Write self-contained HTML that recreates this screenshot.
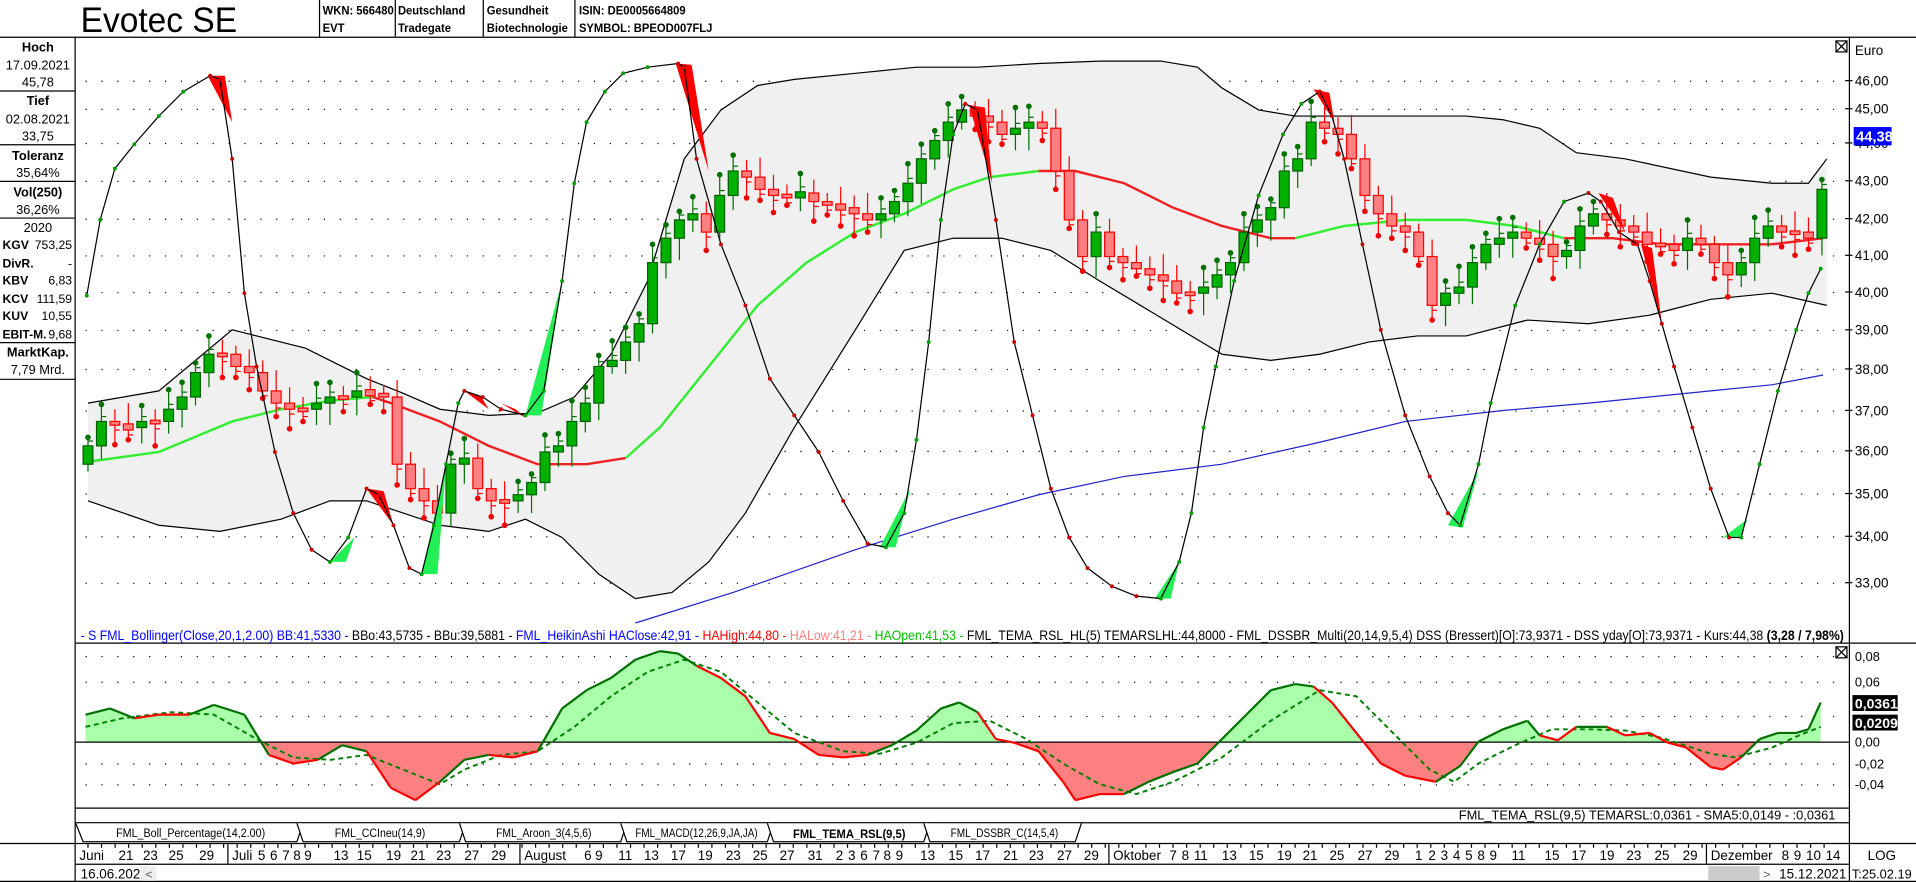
<!DOCTYPE html>
<html><head><meta charset="utf-8">
<style>
html,body{margin:0;padding:0;background:#fff;overflow:hidden;width:1916px;height:882px}
#w{width:1568px;height:722px;transform:scale(1.22194,1.2216);transform-origin:0 0;position:relative}
svg text{font-family:"Liberation Sans",Arial,sans-serif}
</style></head><body><div id="w">
<svg id="s" width="1568" height="722" viewBox="0 0 1568 722" xmlns="http://www.w3.org/2000/svg">
<defs>
<clipPath id="cm"><rect x="62" y="31" width="1451" height="495"/></clipPath>
<clipPath id="up"><rect x="62" y="527" width="1451" height="80"/></clipPath>
<clipPath id="dn"><rect x="62" y="607" width="1451" height="54"/></clipPath>
</defs>
<rect width="1568" height="722" fill="#fff"/>
<text x="66" y="26" font-size="29" fill="#000" textLength="128" lengthAdjust="spacingAndGlyphs">Evotec SE</text>
<g stroke="#000" stroke-width="1" fill="none">
<line x1="261.5" y1="0" x2="261.5" y2="30"/><line x1="323.5" y1="0" x2="323.5" y2="30"/><line x1="395.5" y1="0" x2="395.5" y2="30"/><line x1="470.5" y1="0" x2="470.5" y2="30"/>
<line x1="0" y1="30.5" x2="1568" y2="30.5"/>
<line x1="61.5" y1="30" x2="61.5" y2="722"/>
<line x1="1513.5" y1="30" x2="1513.5" y2="722"/>
<line x1="62" y1="526.5" x2="1568" y2="526.5"/>
<line x1="62" y1="661.5" x2="1513" y2="661.5"/>
<line x1="62" y1="673.5" x2="1513" y2="673.5"/>
<line x1="0" y1="690.5" x2="1568" y2="690.5"/>
<line x1="62" y1="707.5" x2="1513" y2="707.5"/>
<line x1="0" y1="721.5" x2="1568" y2="721.5"/>
<line x1="0" y1="74.5" x2="61" y2="74.5"/><line x1="0" y1="118.5" x2="61" y2="118.5"/><line x1="0" y1="148.5" x2="61" y2="148.5"/><line x1="0" y1="178.5" x2="61" y2="178.5"/><line x1="0" y1="280.5" x2="61" y2="280.5"/><line x1="0" y1="310.5" x2="61" y2="310.5"/>
</g>
<g font-size="10" font-weight="bold" transform="scale(0.92,1)">
<text x="287" y="12">WKN: 566480</text><text x="287" y="26">EVT</text>
<text x="354" y="12">Deutschland</text><text x="354" y="26">Tradegate</text>
<text x="433" y="12">Gesundheit</text><text x="433" y="26">Biotechnologie</text>
<text x="515" y="12">ISIN: DE0005664809</text><text x="515" y="26">SYMBOL: BPEOD007FLJ</text>
</g>
<g font-size="10.5" text-anchor="middle">
<text x="31" y="42" font-weight="bold">Hoch</text><text x="31" y="57">17.09.2021</text><text x="31" y="71">45,78</text>
<text x="31" y="86" font-weight="bold">Tief</text><text x="31" y="101">02.08.2021</text><text x="31" y="115">33,75</text>
<text x="31" y="131" font-weight="bold">Toleranz</text><text x="31" y="145">35,64%</text>
<text x="31" y="161" font-weight="bold">Vol(250)</text><text x="31" y="175">36,26%</text>
<text x="31" y="190">2020</text>
<text x="31" y="292" font-weight="bold">MarktKap.</text><text x="31" y="306">7,79 Mrd.</text>
</g>
<g font-size="10">
<text x="2" y="204" font-weight="bold">KGV</text><text x="59" y="204" text-anchor="end">753,25</text>
<text x="2" y="219" font-weight="bold">DivR.</text><text x="59" y="219" text-anchor="end">-</text>
<text x="2" y="233" font-weight="bold">KBV</text><text x="59" y="233" text-anchor="end">6,83</text>
<text x="2" y="248" font-weight="bold">KCV</text><text x="59" y="248" text-anchor="end">111,59</text>
<text x="2" y="262" font-weight="bold">KUV</text><text x="59" y="262" text-anchor="end">10,55</text>
<text x="2" y="277" font-weight="bold" textLength="36" lengthAdjust="spacingAndGlyphs">EBIT-M.</text><text x="59" y="277" text-anchor="end">9,68</text>
</g>
<g id="grid"></g>
<g id="main" clip-path="url(#cm)"></g>
<g font-size="11">
<text x="1518" y="45">Euro</text>
<text x="1518" y="70">46,00</text><text x="1518" y="93">45,00</text><text x="1518" y="121">44,00</text><text x="1518" y="152">43,00</text><text x="1518" y="183">42,00</text><text x="1518" y="213">41,00</text><text x="1518" y="243">40,00</text><text x="1518" y="274">39,00</text><text x="1518" y="306">38,00</text><text x="1518" y="340">37,00</text><text x="1518" y="373">36,00</text><text x="1518" y="408">35,00</text><text x="1518" y="443">34,00</text><text x="1518" y="481">33,00</text>
</g>
<g stroke="#000">
<line x1="1510" y1="66" x2="1516" y2="66"/><line x1="1510" y1="89" x2="1516" y2="89"/><line x1="1510" y1="117" x2="1516" y2="117"/><line x1="1510" y1="148" x2="1516" y2="148"/><line x1="1510" y1="179" x2="1516" y2="179"/><line x1="1510" y1="209" x2="1516" y2="209"/><line x1="1510" y1="239" x2="1516" y2="239"/><line x1="1510" y1="270" x2="1516" y2="270"/><line x1="1510" y1="302" x2="1516" y2="302"/><line x1="1510" y1="336" x2="1516" y2="336"/><line x1="1510" y1="369" x2="1516" y2="369"/><line x1="1510" y1="404" x2="1516" y2="404"/><line x1="1510" y1="439" x2="1516" y2="439"/><line x1="1510" y1="477" x2="1516" y2="477"/>
</g>
<rect x="1517" y="104" width="31" height="15" fill="#0000ff"/>
<text x="1519" y="116" font-size="12" font-weight="bold" fill="#fff">44,38</text>
<g stroke="#000" fill="#fff"><rect x="1502.5" y="33.5" width="9" height="9"/><line x1="1503" y1="34" x2="1511" y2="42"/><line x1="1511" y1="34" x2="1503" y2="42"/>
<rect x="1502.5" y="529.5" width="9" height="9"/><line x1="1503" y1="530" x2="1511" y2="538"/><line x1="1511" y1="530" x2="1503" y2="538"/></g>
<text x="66" y="524" font-size="11" textLength="1443" lengthAdjust="spacingAndGlyphs"><tspan fill="#0000ff">- S FML_Bollinger(Close,20,1,2.00) BB:41,5330 - </tspan><tspan fill="#000">BBo:43,5735 - BBu:39,5881 - </tspan><tspan fill="#0000ff">FML_HeikinAshi HAClose:42,91 - </tspan><tspan fill="#ff0000">HAHigh:44,80 - </tspan><tspan fill="#ff8080">HALow:41,21 - </tspan><tspan fill="#00c000">HAOpen:41,53 - </tspan><tspan fill="#000">FML_TEMA_RSL_HL(5) TEMARSLHL:44,8000 - FML_DSSBR_Multi(20,14,9,5,4) DSS (Bressert)[O]:73,9371 - DSS yday[O]:73,9371 - Kurs:44,38 </tspan><tspan font-weight="bold">(3,28 / 7,98%)</tspan></text>
<g id="ind"></g>
<g font-size="10.5">
<text x="1518" y="541">0,08</text><text x="1518" y="562">0,06</text><text x="1518" y="611">0,00</text><text x="1518" y="629">-0,02</text><text x="1518" y="646">-0,04</text>
</g>
<rect x="1516" y="569" width="37" height="13" fill="#000"/><text x="1518" y="580" font-size="11.5" font-weight="bold" fill="#fff">0,0361</text>
<rect x="1516" y="585" width="37" height="13" fill="#000"/><text x="1518" y="596" font-size="11.5" font-weight="bold" fill="#fff">0,0209</text>
<text x="1502" y="671" font-size="10.5" text-anchor="end">FML_TEMA_RSL(9,5) TEMARSL:0,0361 - SMA5:0,0149 - :0,0361</text>
<g fill="#fff" stroke="#000">
<path d="M62 674 L68 689 L243 689 L248 674"/>
<path d="M243 674 L248 689 L376 689 L381 674"/>
<path d="M376 674 L381 689 L508 689 L513 674"/>
<path d="M508 674 L513 689 L628 689 L633 674"/>
<path d="M628 674 L633 689 L756 689 L761 674"/>
<path d="M756 674 L761 689 L880 689 L885 674"/>
</g>
<g font-size="10" text-anchor="middle">
<text x="156" y="685" textLength="122" lengthAdjust="spacingAndGlyphs">FML_Boll_Percentage(14,2.00)</text>
<text x="311" y="685" textLength="74" lengthAdjust="spacingAndGlyphs">FML_CCIneu(14,9)</text>
<text x="445" y="685" textLength="78" lengthAdjust="spacingAndGlyphs">FML_Aroon_3(4,5,6)</text>
<text x="570" y="685" textLength="100" lengthAdjust="spacingAndGlyphs">FML_MACD(12,26,9,JA,JA)</text>
<text x="695" y="686" font-weight="bold" textLength="92" lengthAdjust="spacingAndGlyphs">FML_TEMA_RSL(9,5)</text>
<text x="822" y="685" textLength="88" lengthAdjust="spacingAndGlyphs">FML_DSSBR_C(14,5,4)</text>
</g>
<g id="dates" font-size="11"></g>
<text x="66" y="719" font-size="11">16.06.2021</text>
<rect x="116" y="709" width="12" height="12" fill="#eee"/><text x="119" y="719" font-size="10" fill="#555">&lt;</text>
<rect x="1398" y="709" width="42" height="12" fill="#ccc"/><text x="1443" y="719" font-size="10" fill="#555">&gt;</text>
<text x="1511" y="719" font-size="11" text-anchor="end">15.12.2021</text>
<text x="1540" y="704" font-size="11" text-anchor="middle">LOG</text>
<text x="1540" y="719" font-size="10.5" text-anchor="middle">T:25.02.19</text>
</svg></div>
<script>
var NS="http://www.w3.org/2000/svg";
function el(p,t,a){var e=document.createElementNS(NS,t);for(var k in a)e.setAttribute(k,a[k]);p.appendChild(e);return e;}
function pts(a){var s=[];for(var i=0;i<a.length;i+=2)s.push(a[i]+","+a[i+1]);return s.join(" ");}
var G=document.getElementById("grid"),M=document.getElementById("main"),I=document.getElementById("ind");
var gy=[66,89,117,148,179,209,239,270,302,336,369,404,439,477];
var d="";
gy.forEach(function(y){for(var x=70;x<1505;x+=13)d+="M"+x+" "+y+"h1v1h-1z";});
el(G,"path",{d:d,fill:"#000"});
var U=[72,330,130,320,160,295,190,270,250,285,300,310,330,322,360,335,400,340,440,338,470,325,500,290,530,230,560,130,590,90,620,70,650,65,700,60,750,55,800,55,850,52,900,50,950,50,980,55,1000,72,1030,90,1060,95,1100,95,1150,95,1200,95,1230,98,1260,105,1290,125,1330,130,1400,145,1450,150,1480,150,1495,130];
var L=[72,410,130,430,180,435,230,425,270,410,300,410,330,420,360,430,400,435,430,425,460,440,490,470,520,490,550,485,580,460,610,420,650,350,700,270,740,205,780,195,820,195,860,205,900,230,950,260,1000,290,1040,295,1080,290,1120,280,1160,275,1200,275,1250,262,1300,265,1350,258,1400,245,1450,240,1495,250];
var poly=U.slice();for(var i=L.length-2;i>=0;i-=2)poly.push(L[i],L[i+1]);
el(M,"polygon",{points:pts(poly),fill:"#f0f0f0"});
el(M,"polyline",{points:pts(U),fill:"none",stroke:"#000","stroke-width":1});
el(M,"polyline",{points:pts(L),fill:"none",stroke:"#000","stroke-width":1});
el(M,"polyline",{points:pts([72,378,130,370,190,345,230,335,270,328,305,325]),fill:"none",stroke:"#33ee33","stroke-width":2});
el(M,"polyline",{points:pts([305,325,320,330,360,345,400,365,440,380,480,380,512,375]),fill:"none",stroke:"#ee2222","stroke-width":2});
el(M,"polyline",{points:pts([512,375,540,350,580,300,620,250,660,215,700,190,740,175,780,155,810,145,850,140]),fill:"none",stroke:"#33ee33","stroke-width":2});
el(M,"polyline",{points:pts([850,140,880,140,920,150,960,170,1000,185,1040,195,1060,195]),fill:"none",stroke:"#ee2222","stroke-width":2});
el(M,"polyline",{points:pts([1060,195,1100,185,1150,180,1200,180,1240,185,1280,195]),fill:"none",stroke:"#33ee33","stroke-width":2});
el(M,"polyline",{points:pts([1280,195,1320,195,1360,200,1400,200,1450,200,1492,195]),fill:"none",stroke:"#ee2222","stroke-width":2});
el(M,"polyline",{points:pts([520,510,600,485,700,450,780,425,850,405,920,390,1000,380,1080,362,1150,345,1230,336,1300,330,1400,320,1450,315,1492,307]),fill:"none",stroke:"#2222cc","stroke-width":1});
var C=[365,345,348,350,345,345,335,325,305,290,290,300,305,320,330,335,335,330,325,325,320,322,325,380,400,410,420,380,375,400,410,410,405,395,370,365,345,330,300,295,280,265,215,195,180,175,190,160,140,145,155,160,160,158,165,168,170,175,180,175,165,150,130,115,100,90,95,100,110,105,100,105,140,180,210,190,210,215,220,225,230,240,240,235,225,215,190,180,170,140,130,100,105,110,130,160,175,185,190,210,250,240,235,215,200,195,190,195,200,210,205,185,175,180,185,190,200,200,205,195,200,215,225,215,195,185,190,190,195,155];
var x0=72,dx=(1491-72)/(C.length-1);
for(var i=0;i<C.length;i++){
 var x=x0+i*dx,o=i?C[i-1]:C[0]+15,c=C[i],up=c<o;
 var t=Math.min(o,c),b=Math.max(o,c);if(b-t<3){t-=1;b+=2;}
 var hi=t-7-(i*7%11),lo=b+6+(i*5%13);
 var sc=up?"#007000":"#ff0000";
 el(M,"line",{x1:x,y1:hi,x2:x,y2:lo,stroke:sc,"stroke-width":1});
 el(M,"line",{x1:x,y1:up?t-4:b+4,x2:x+4,y2:up?t-4:b+4,stroke:sc});
 el(M,"rect",{x:x-4,y:t,width:8,height:b-t,fill:up?"#00b000":"#ff8080",stroke:up?"#006000":"#ff0000","stroke-width":1});
 el(M,"circle",{cx:x,cy:up?hi:lo,r:2.3,fill:up?"#007000":"#ee0000"});
}
var T=[71,242,82,180,94,138,110,118,130,95,150,75,172,62,180,65,190,130,200,240,210,300,225,370,240,420,255,450,270,460,285,440,300,400,310,405,322,430,335,465,345,470,355,430,365,380,375,330,380,320,395,325,410,335,430,340,445,320,460,230,470,150,480,100,495,75,510,60,530,55,555,52,560,55,570,130,590,200,610,250,630,310,650,340,670,370,690,410,710,445,725,448,740,420,750,360,760,280,770,180,780,110,790,85,800,90,815,180,830,280,845,340,860,400,875,440,890,465,910,480,930,488,950,490,965,460,975,420,985,350,995,300,1010,230,1030,160,1050,110,1065,85,1080,75,1090,95,1100,130,1115,200,1130,270,1150,340,1170,390,1185,420,1195,430,1210,380,1220,330,1240,250,1260,200,1280,165,1300,158,1310,165,1325,190,1340,200,1350,230,1360,265,1370,300,1385,350,1400,400,1415,440,1425,440,1440,380,1455,320,1470,270,1480,240,1490,220];
var tri=[["#ff0000",[170,62,184,62,190,100]],["#ff0000",[300,400,314,402,322,430]],["#ff0000",[380,320,394,325,400,335]],["#ff0000",[410,330,422,335,430,342]],["#ff0000",[553,52,566,53,580,140]],["#ff0000",[793,86,806,88,812,150]],["#ff0000",[1075,73,1088,76,1092,100]],["#ff0000",[1308,158,1320,162,1330,190]],["#ff0000",[1343,200,1352,203,1360,265]],
["#22ee55",[270,460,283,460,290,440]],["#22ee55",[345,470,358,470,365,380]],["#22ee55",[430,340,443,340,460,230]],["#22ee55",[720,448,733,448,745,400]],["#22ee55",[945,490,958,490,965,460]],["#22ee55",[1185,430,1197,432,1210,385]],["#22ee55",[1410,440,1424,440,1430,425]]];
tri.forEach(function(t){el(M,"polygon",{points:pts(t[1]),fill:t[0]});});
el(M,"polyline",{points:pts(T),fill:"none",stroke:"#000","stroke-width":1});
for(var i=0;i<T.length;i+=2){var rising=i+3<T.length?T[i+3]<T[i+1]:true;el(M,"circle",{cx:T[i],cy:T[i+1],r:1.6,fill:rising?"#00a000":"#cc0000"});}
var P=[70,585,90,580,110,588,130,585,155,585,175,577,200,585,220,618,240,625,260,622,280,610,300,615,320,645,340,655,360,640,380,622,400,618,420,620,440,615,460,580,480,565,500,555,520,540,540,533,555,535,570,545,590,555,610,570,630,600,650,605,670,618,690,620,710,618,730,610,750,598,770,580,785,575,800,583,815,605,830,608,850,615,870,640,880,655,900,650,920,650,940,640,960,632,980,625,1000,605,1020,585,1040,565,1060,560,1075,562,1090,575,1110,600,1130,625,1150,635,1175,640,1195,627,1210,607,1230,597,1250,590,1260,602,1275,606,1290,595,1315,595,1330,602,1350,600,1365,608,1380,612,1400,628,1410,630,1425,620,1440,605,1455,600,1470,600,1480,597,1490,575];
var S=[70,595,100,588,140,583,175,585,210,605,240,620,270,622,300,618,330,630,360,642,380,630,410,618,440,615,470,595,500,570,530,550,560,540,590,550,620,575,650,600,690,615,720,617,750,608,780,592,810,590,840,605,870,625,900,642,930,650,960,640,1000,620,1040,590,1080,565,1110,570,1140,600,1170,630,1190,640,1210,625,1240,610,1270,597,1300,597,1330,598,1360,604,1400,617,1420,620,1450,612,1470,603,1490,595];
function sig(x){for(var i=0;i<S.length-2;i+=2){if(x>=S[i]&&x<=S[i+2]){var f=(x-S[i])/(S[i+2]-S[i]);return S[i+1]+f*(S[i+3]-S[i+1]);}}return S[S.length-1];}
var dd="";for(var x=70;x<1505;x+=13)dd+="M"+x+" 537h1v1h-1zM"+x+" 558h1v1h-1zM"+x+" 586h1v1h-1zM"+x+" 625h1v1h-1zM"+x+" 642h1v1h-1z";
el(I,"path",{d:dd,fill:"#000"});
var fp=[70,607].concat(P,[1490,607]);
el(I,"polygon",{points:pts(fp),fill:"#aaffaa","clip-path":"url(#up)"});
el(I,"polygon",{points:pts(fp),fill:"#ff8080","clip-path":"url(#dn)"});
el(I,"line",{x1:62,y1:607.5,x2:1513,y2:607.5,stroke:"#000"});
el(I,"polyline",{points:pts(S),fill:"none",stroke:"#008000","stroke-width":1.6,"stroke-dasharray":"4,3"});
for(var i=0;i<P.length-2;i+=2){var mx=(P[i]+P[i+2])/2,my=(P[i+1]+P[i+3])/2;
 el(I,"line",{x1:P[i],y1:P[i+1],x2:P[i+2],y2:P[i+3],stroke:my<sig(mx)?"#007000":"#ff0000","stroke-width":1.8});}
var D=document.getElementById("dates");
var lab=[[65,"Juni"],[97,"21"],[117,"23"],[138,"25"],[163,"29"],[190,"Juli"],[211,"5"],[221,"6"],[231,"7"],[240,"8"],[249,"9"],[273,"13"],[292,"15"],[316,"19"],[336,"21"],[357,"23"],[380,"27"],[402,"29"],[429,"August"],[478,"6"],[487,"9"],[506,"11"],[527,"13"],[549,"17"],[571,"19"],[594,"23"],[616,"25"],[638,"27"],[661,"31"],[684,"2"],[694,"3"],[704,"6"],[714,"7"],[723,"8"],[733,"9"],[753,"13"],[776,"15"],[798,"17"],[821,"21"],[842,"23"],[865,"27"],[887,"29"],[911,"Oktober"],[957,"7"],[967,"8"],[977,"11"],[1000,"13"],[1022,"15"],[1045,"19"],[1066,"21"],[1088,"25"],[1111,"27"],[1133,"29"],[1158,"1"],[1169,"2"],[1179,"3"],[1189,"4"],[1199,"5"],[1209,"8"],[1219,"9"],[1237,"11"],[1264,"15"],[1286,"17"],[1309,"19"],[1331,"23"],[1354,"25"],[1377,"29"],[1400,"Dezember"],[1458,"8"],[1468,"9"],[1478,"10"],[1494,"14"]];
lab.forEach(function(l){var t=el(D,"text",{x:l[0],y:704});t.textContent=l[1];});
[188,427,909,1398].forEach(function(x){el(D,"line",{x1:x-1.5,y1:691,x2:x-1.5,y2:707,stroke:"#000"});});
for(var x=72;x<1495;x+=11.1)el(D,"line",{x1:x,y1:691,x2:x,y2:694,stroke:"#000"});
</script>
</body></html>
